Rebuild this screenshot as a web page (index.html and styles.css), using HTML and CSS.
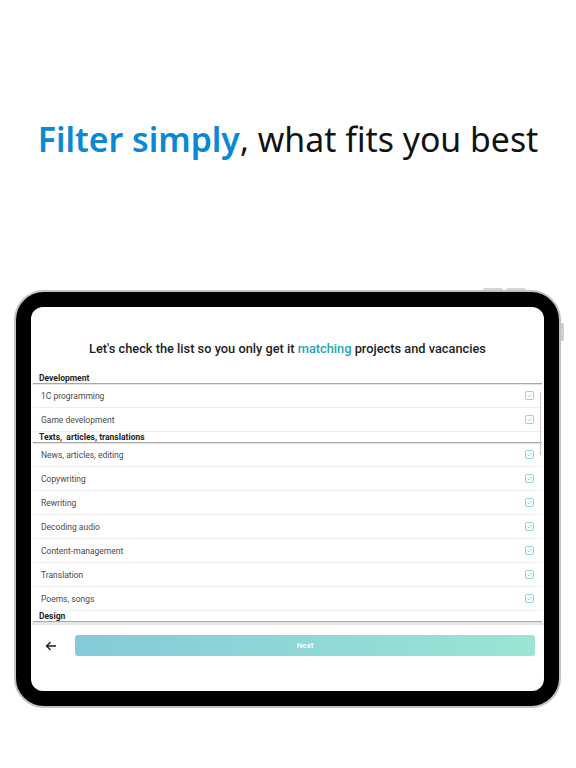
FILE: index.html
```html
<!DOCTYPE html>
<html lang="en">
<head>
    <meta charset="UTF-8">
    <meta name="viewport" content="width=device-width, initial-scale=1.0">
    <title>Filter simply</title>
    <link rel="stylesheet" href="styles.css">
</head>
<body>
    <div class="hero">
        <h1><span class="accent">Filter simply</span>, what fits you best</h1>
    </div>
    <div class="device">
        <span class="btn-top btn-top-1"></span>
        <span class="btn-top btn-top-2"></span>
        <span class="btn-side"></span>
        <div class="screen">
            <h2 class="title">Let's check the list so you only get it <span class="teal">matching</span> projects and vacancies</h2>
            <div class="list">
                <div class="scrollbar"></div>
                <div class="section">Development</div>
                <div class="row"><span>1C programming</span><svg class="check" viewBox="0 0 9 9"><rect x="0.5" y="0.5" width="8" height="8" rx="1.5"/><polyline points="2.6,4.6 4,5.9 6.5,3.1"/></svg></div>
                <div class="row"><span>Game development</span><svg class="check" viewBox="0 0 9 9"><rect x="0.5" y="0.5" width="8" height="8" rx="1.5"/><polyline points="2.6,4.6 4,5.9 6.5,3.1"/></svg></div>
                <div class="section">Texts,&nbsp; articles, translations</div>
                <div class="row"><span>News, articles, editing</span><svg class="check" viewBox="0 0 9 9"><rect x="0.5" y="0.5" width="8" height="8" rx="1.5"/><polyline points="2.6,4.6 4,5.9 6.5,3.1"/></svg></div>
                <div class="row"><span>Copywriting</span><svg class="check" viewBox="0 0 9 9"><rect x="0.5" y="0.5" width="8" height="8" rx="1.5"/><polyline points="2.6,4.6 4,5.9 6.5,3.1"/></svg></div>
                <div class="row"><span>Rewriting</span><svg class="check" viewBox="0 0 9 9"><rect x="0.5" y="0.5" width="8" height="8" rx="1.5"/><polyline points="2.6,4.6 4,5.9 6.5,3.1"/></svg></div>
                <div class="row"><span>Decoding audio</span><svg class="check" viewBox="0 0 9 9"><rect x="0.5" y="0.5" width="8" height="8" rx="1.5"/><polyline points="2.6,4.6 4,5.9 6.5,3.1"/></svg></div>
                <div class="row"><span>Content-management</span><svg class="check" viewBox="0 0 9 9"><rect x="0.5" y="0.5" width="8" height="8" rx="1.5"/><polyline points="2.6,4.6 4,5.9 6.5,3.1"/></svg></div>
                <div class="row"><span>Translation</span><svg class="check" viewBox="0 0 9 9"><rect x="0.5" y="0.5" width="8" height="8" rx="1.5"/><polyline points="2.6,4.6 4,5.9 6.5,3.1"/></svg></div>
                <div class="row"><span>Poems, songs</span><svg class="check" viewBox="0 0 9 9"><rect x="0.5" y="0.5" width="8" height="8" rx="1.5"/><polyline points="2.6,4.6 4,5.9 6.5,3.1"/></svg></div>
                <div class="section">Design</div>
            </div>
            <div class="footer">
                <svg class="back" viewBox="0 0 12 10"><path d="M11 5H1.5M5.5 1L1.5 5l4 4"/></svg>
                <button type="button" class="next-button">Next</button>
            </div>
        </div>
    </div>
</body>
</html>
```

FILE: styles.css
```css
body {
    margin: 0;
    padding: 0;
    background-color: #ffffff;
    font-family: 'Roboto', 'Liberation Sans', sans-serif;
}

.hero {
    height: 278px;
    display: flex;
    align-items: center;
    justify-content: center;
}

.hero h1 {
    margin: 0;
    font-family: 'Noto Sans', 'Open Sans', sans-serif;
    font-size: 33.8px;
    font-weight: 400;
    color: #111111;
    white-space: nowrap;
}

.accent {
    color: #0a88d4;
    font-weight: 600;
}

.device {
    position: relative;
    width: 547px;
    margin: 12px 0 0 14px;
    padding: 15px;
    box-sizing: border-box;
    background-color: #000000;
    border: 2px solid #c2c2c2;
    border-radius: 30px;
}

.btn-top {
    position: absolute;
    top: -4px;
    height: 2px;
    background-color: #d6d6d6;
    border-radius: 2px 2px 0 0;
}

.btn-top-1 {
    left: 467px;
    width: 20px;
}

.btn-top-2 {
    left: 490px;
    width: 20px;
}

.btn-side {
    position: absolute;
    right: -5px;
    top: 31px;
    width: 3px;
    height: 18px;
    background-color: #cfcfcf;
    border-radius: 0 2px 2px 0;
}

.screen {
    height: 384px;
    background-color: #ffffff;
    border-radius: 12px;
    display: flex;
    flex-direction: column;
    overflow: hidden;
}

.title {
    margin: 35px 0 16px 0;
    font-size: 12.8px;
    line-height: 14px;
    font-weight: 500;
    color: #1d1d1d;
    text-align: center;
}

.teal {
    color: #2ba3b3;
}

.list {
    position: relative;
    height: 251px;
    margin: 0 2px;
    padding-top: 1px;
    overflow: hidden;
    flex-shrink: 0;
    box-sizing: border-box;
}

.scrollbar {
    position: absolute;
    right: 1px;
    top: 20px;
    width: 1.5px;
    height: 63px;
    background-color: #c4c4c4;
}

.section {
    height: 10px;
    line-height: 10px;
    padding-left: 6px;
    font-size: 8.5px;
    font-weight: 700;
    color: #1f1f1f;
    border-bottom: 1px solid #a8a8a8;
    box-shadow: 0 1px 0 #e4e4e4;
}

.row {
    height: 23px;
    display: flex;
    align-items: center;
    justify-content: space-between;
    padding: 0 8px 0 8px;
    font-size: 8.5px;
    color: #4a4a4a;
    border-bottom: 1px solid #eeeeee;
}

.check {
    width: 9px;
    height: 9px;
    fill: none;
    stroke: #85cfd5;
    stroke-width: 0.9;
}

.footer {
    flex: 1;
    display: flex;
    align-items: flex-start;
    padding: 10px 9px 0 14px;
    border-top: 2px solid #e8e8e8;
}

.back {
    width: 12px;
    height: 10px;
    margin: 6px 18px 0 0;
    fill: none;
    stroke: #1c1c1c;
    stroke-width: 1.3;
}

.next-button {
    flex: 1;
    height: 21px;
    border: none;
    border-radius: 3px;
    background: linear-gradient(to right, #83cbd9, #9ae5d4);
    color: #ffffff;
    font-family: 'Roboto', sans-serif;
    font-size: 8px;
    font-weight: 500;
    cursor: pointer;
}
```
